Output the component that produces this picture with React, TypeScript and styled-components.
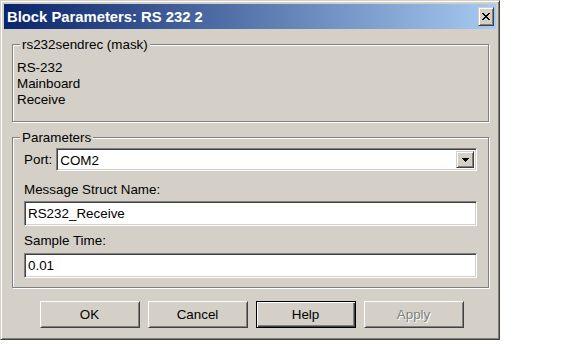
import styled, { createGlobalStyle } from "styled-components";

const GlobalStyle = createGlobalStyle`
  html, body {
    margin: 0;
    padding: 0;
    background: #fff;
  }
  body {
    font-family: "Liberation Sans", Arial, sans-serif;
    font-size: 13.4px;
    color: #000;
  }
`;

const Window = styled.div`
  width: 500px;
  height: 340px;
  box-sizing: border-box;
  padding: 3px;
  background: #d4d0c8;
  border: 1px solid;
  border-color: #d4d0c8 #404040 #404040 #d4d0c8;
  box-shadow: inset 1px 1px 0 #fff, inset -1px -1px 0 #808080;
  display: flex;
  flex-direction: column;
`;

const TitleBar = styled.div`
  height: 25px;
  display: flex;
  align-items: center;
  justify-content: space-between;
  padding: 0 2px 0 3px;
  background: linear-gradient(to right, #0a246a, #a6caf0);
`;

const Title = styled.span`
  color: #fff;
  font-weight: bold;
  font-size: 14.8px;
  white-space: nowrap;
`;

const Raised = styled.div`
  box-sizing: border-box;
  background: #d4d0c8;
  border: 1px solid;
  border-color: #d4d0c8 #404040 #404040 #d4d0c8;
  box-shadow: inset 1px 1px 0 #fff, inset -1px -1px 0 #808080;
  display: flex;
  align-items: center;
  justify-content: center;
`;

const CloseButton = styled(Raised)`
  width: 16px;
  height: 19px;
`;

const Content = styled.div`
  flex: 1;
  display: flex;
  flex-direction: column;
  padding: 0 7px 0 8px;
`;

const Group = styled.fieldset<{ $top: number }>`
  margin: ${(p) => p.$top}px 0 0;
  padding: 0;
  min-width: 0;
  border: 1px solid #808080;
  box-shadow: 1px 1px 0 #fff, inset 1px 1px 0 #fff;
`;

const Legend = styled.legend`
  margin-left: 7px;
  padding: 0 2px;
  line-height: 15px;
  background: #d4d0c8;
`;

const Description = styled.div`
  padding: 8px 4px 13px;
  line-height: 16px;
`;

const Params = styled.div`
  display: flex;
  flex-direction: column;
  padding: 3px 11px 9px;
`;

const PortRow = styled.div`
  display: flex;
  align-items: center;
  gap: 4px;
`;

const Label = styled.label<{ $gap?: number }>`
  display: block;
  line-height: 16px;
  margin-top: ${(p) => p.$gap ?? 0}px;
`;

const Sunken = styled.div`
  box-sizing: border-box;
  background: #fff;
  border: 1px solid;
  border-color: #808080 #fff #fff #808080;
  box-shadow: inset 1px 1px 0 #404040, inset -1px -1px 0 #d4d0c8;
`;

const Select = styled(Sunken)`
  flex: 1;
  height: 23px;
  display: flex;
  align-items: stretch;
  padding: 2px;
`;

const SelectValue = styled.span`
  flex: 1;
  padding-left: 1px;
  line-height: 19px;
`;

const DropButton = styled(Raised)`
  width: 18px;
`;

const TextField = styled(Sunken)<{ $gap: number }>`
  height: 25px;
  margin-top: ${(p) => p.$gap}px;
  padding: 0 3px;
  line-height: 24px;
`;

const ButtonRow = styled.div`
  display: flex;
  justify-content: center;
  gap: 8px;
  margin-top: 13px;
  padding-left: 2px;
`;

const Button = styled.button<{ $default?: boolean }>`
  width: 100px;
  height: 27px;
  font: inherit;
  color: #000;
  background: #d4d0c8;
  border: 1px solid;
  border-color: ${(p) => (p.$default ? "#000" : "#fff #404040 #404040 #fff")};
  box-shadow: ${(p) =>
    p.$default
      ? "inset 1px 1px 0 #fff, inset -1px -1px 0 #404040, inset -2px -2px 0 #808080"
      : "inset 1px 1px 0 #d4d0c8, inset -1px -1px 0 #808080"};
  padding: 0;

  &:disabled {
    color: #808080;
    text-shadow: 1px 1px 0 #fff;
  }
`;

const Pixels: React.FC<{ w: number; h: number; rows: [number, number][][] }> = ({ w, h, rows }) => (
  <svg width={w} height={h} viewBox={`0 0 ${w} ${h}`} shapeRendering="crispEdges">
    {rows.map((segs, y) =>
      segs.map(([x0, x1], i) => <rect key={`${y}-${i}`} x={x0} y={y} width={x1 - x0 + 1} height={1} fill="#000" />)
    )}
  </svg>
);

const closeRows: [number, number][][] = [
  [[0, 1], [6, 7]],
  [[1, 2], [5, 6]],
  [[2, 5]],
  [[3, 4]],
  [[2, 5]],
  [[1, 2], [5, 6]],
  [[0, 1], [6, 7]],
];

const arrowRows: [number, number][][] = [[[0, 6]], [[1, 5]], [[2, 4]], [[3, 3]]];

export default function App() {
  return (
    <>
      <GlobalStyle />
      <Window>
        <TitleBar>
          <Title>Block Parameters: RS 232 2</Title>
          <CloseButton>
            <Pixels w={8} h={7} rows={closeRows} />
          </CloseButton>
        </TitleBar>
        <Content>
          <Group $top={8}>
            <Legend>rs232sendrec (mask)</Legend>
            <Description>
              RS-232
              <br />
              Mainboard
              <br />
              Receive
            </Description>
          </Group>
          <Group $top={8}>
            <Legend>Parameters</Legend>
            <Params>
              <PortRow>
                <Label>Port:</Label>
                <Select>
                  <SelectValue>COM2</SelectValue>
                  <DropButton>
                    <Pixels w={7} h={4} rows={arrowRows} />
                  </DropButton>
                </Select>
              </PortRow>
              <Label $gap={11}>Message Struct Name:</Label>
              <TextField $gap={3}>RS232_Receive</TextField>
              <Label $gap={7}>Sample Time:</Label>
              <TextField $gap={4}>0.01</TextField>
            </Params>
          </Group>
          <ButtonRow>
            <Button>OK</Button>
            <Button>Cancel</Button>
            <Button $default>Help</Button>
            <Button disabled>Apply</Button>
          </ButtonRow>
        </Content>
      </Window>
    </>
  );
}
